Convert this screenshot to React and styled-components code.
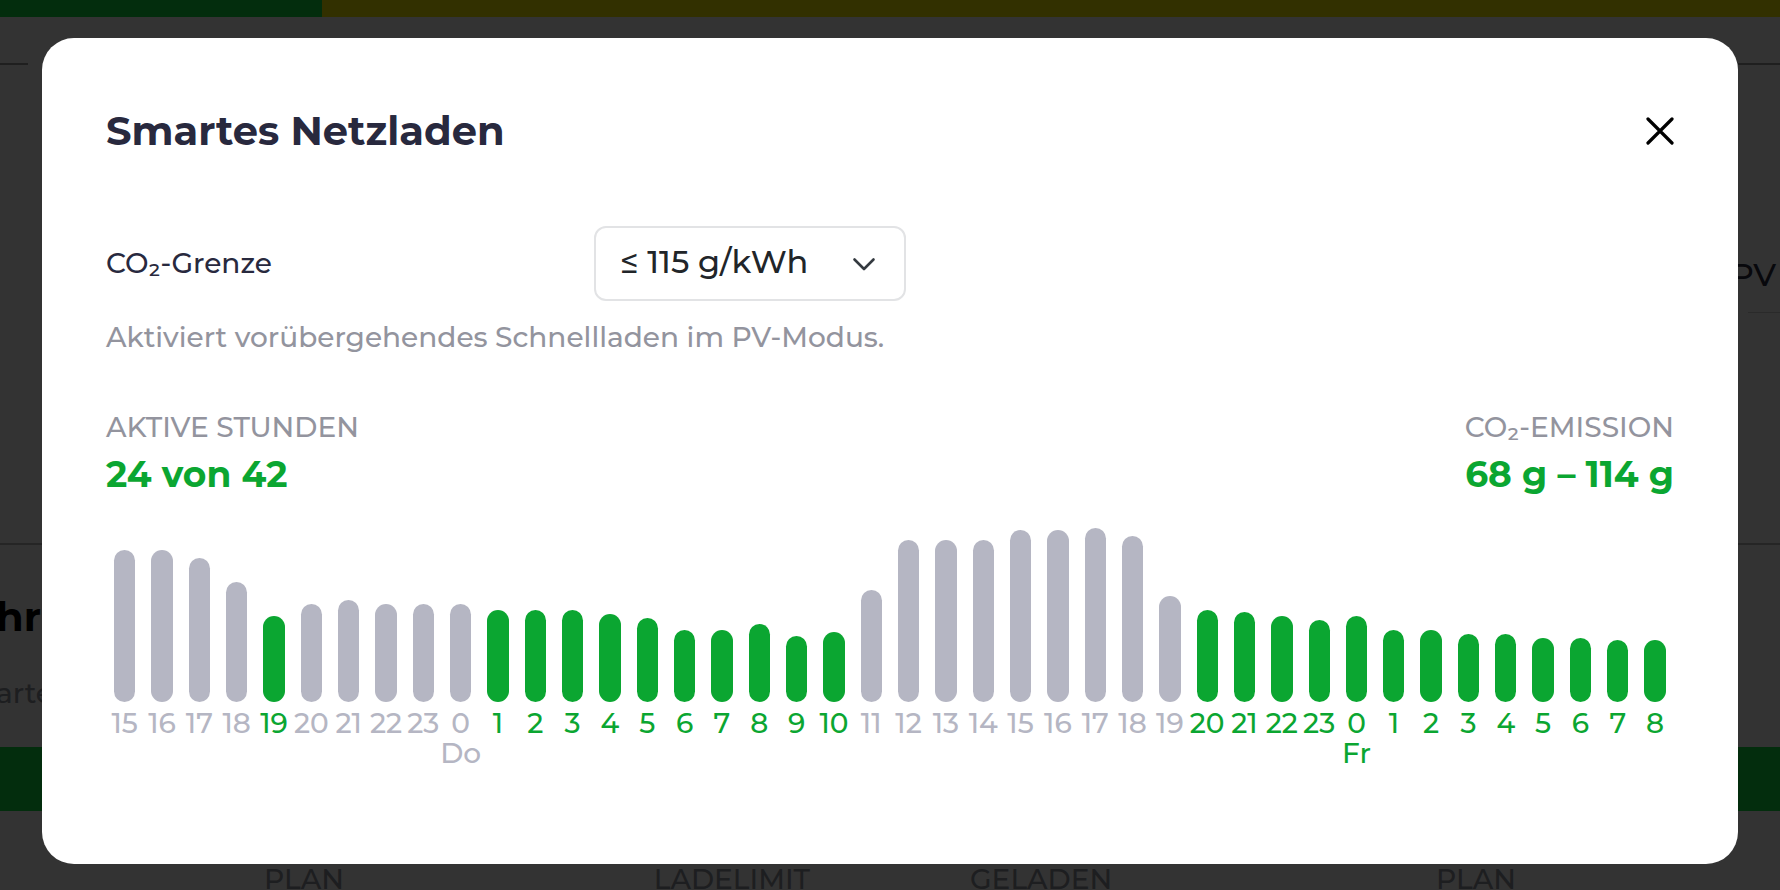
import React from "react";
import styled, { createGlobalStyle } from "styled-components";

const green = "#0ba631";
const greyBar = "#b5b6c3";
const muted = "#93949e";
const ink = "#28293e";

const GlobalStyle = createGlobalStyle`
  * { box-sizing: border-box; }
  html, body, #root { height: 100%; }
  body {
    margin: 0;
    overflow: hidden;
    background: #fff;
    color: ${ink};
    font-family: Montserrat, Inter, "Liberation Sans", sans-serif;
    font-size: 28px;
    font-weight: 500;
  }
`;

/* ---- page behind the dialog ---- */

const Page = styled.div`
  display: flex;
  flex-direction: column;
  height: 100vh;
  overflow: hidden;

  > * {
    flex-shrink: 0;
  }
`;

const EnergyBar = styled.div`
  display: grid;
  grid-template-columns: 322px 1fr;
  height: 17px;
`;

const EnergySegment = styled.div`
  background: ${(p) => (p.$self ? "#0fde41" : "#faf000")};
`;

const HeaderRules = styled.div`
  display: flex;
  justify-content: space-between;
  padding-top: 46px;
`;

const Rule = styled.div`
  width: ${(p) => p.$width}px;
  border-top: 2px solid #999;
`;

const ModeRow = styled.div`
  display: flex;
  justify-content: flex-end;
  align-items: center;
  height: 78px;
  margin-top: 170px;
  font-size: 32px;
  color: ${ink};

  &::after {
    content: "";
    align-self: flex-end;
    width: 32px;
    margin-left: -28px;
    border-bottom: 1px solid #d0d0d0;
  }
`;

const VehicleSection = styled.section`
  margin-top: 230px;
  border-top: 2px solid #bbb;
`;

const VehicleHead = styled.div`
  margin-left: -4px;
`;

const VehicleName = styled.h2`
  margin: 0;
  padding-top: 40px;
  font-size: 40px;
  font-weight: 700;
  line-height: 64px;
  color: #000;
`;

const VehicleState = styled.p`
  margin: 0;
  padding: 26px 0 36px;
  line-height: 36px;
  color: ${muted};
`;

const ChargeBar = styled.div`
  height: 64px;
  background: #0fde41;
`;

const Carousel = styled.div`
  display: flex;
  gap: 160px;
  margin-left: -202px;
  padding-top: 48px;
`;

const Card = styled.div`
  display: grid;
  grid-template-columns: 1fr auto 1fr;
  flex: 0 0 1012px;
  line-height: 40px;
  color: ${muted};
  text-transform: uppercase;
`;

const CardLabel = styled.span`
  grid-column: ${(p) => p.$column};
  text-align: ${(p) => (p.$column === 3 ? "right" : "left")};
`;

/* ---- dialog ---- */

const Backdrop = styled.div`
  position: fixed;
  inset: 0;
  padding: 38px 42px;
  background: rgba(0, 0, 0, 0.8);
`;

const Dialog = styled.section`
  padding: 64px 64px 96px;
  border-radius: 32px;
  background: #fff;
`;

const DialogHeader = styled.header`
  display: flex;
  align-items: center;
  justify-content: space-between;
  margin-bottom: 66px;
`;

const Title = styled.h1`
  margin: 0;
  font-size: 40px;
  font-weight: 700;
  line-height: 58px;
`;

const CloseButton = styled.button`
  display: flex;
  padding: 0;
  border: 0;
  background: none;
  color: #000;
  cursor: pointer;
`;

const FormRow = styled.div`
  display: grid;
  grid-template-columns: 488px 312px;
  align-items: center;
`;

const FormLabel = styled.label`
  padding-bottom: 2px;
`;

const SelectBox = styled.div`
  display: grid;
  align-items: center;

  > * {
    grid-area: 1 / 1;
  }

  svg {
    justify-self: end;
    margin-right: 30px;
    pointer-events: none;
  }
`;

const Select = styled.select`
  appearance: none;
  width: 100%;
  height: 75px;
  padding: 0 72px 4px 24px;
  border: 2px solid #e2e3e5;
  border-radius: 12px;
  background: #fff;
  color: #212529;
  font: inherit;
  font-size: 32px;
`;

const Help = styled.p`
  margin: 16px 0 50px;
  line-height: 40px;
  color: ${muted};
`;

const Summary = styled.div`
  display: flex;
  justify-content: space-between;
  margin-bottom: 24px;
`;

const Fact = styled.div`
  text-align: ${(p) => p.$align};
`;

const FactLabel = styled.div`
  line-height: 40px;
  color: ${muted};
  text-transform: uppercase;
`;

const FactValue = styled.div`
  font-size: 36px;
  font-weight: 700;
  line-height: 55px;
  color: ${green};
`;

const Chart = styled.div`
  display: flex;
`;

const Slot = styled.div`
  flex: 1 1 0;
  min-width: 0;
  color: ${(p) => (p.$active ? green : greyBar)};
`;

const BarTrack = styled.div`
  display: flex;
  align-items: flex-end;
  height: 176px;
  padding: 0 8px;
  margin-bottom: 6px;
`;

const Bar = styled.div`
  flex: 1;
  border-radius: 12px;
  background: currentColor;
`;

const SlotLabel = styled.div`
  display: flex;
  justify-content: center;
  height: 30px;
  line-height: 30px;
  white-space: nowrap;
`;

const heights = [
  152, 152, 144, 120, 86, 98, 102, 98, 98, 98, 92, 92, 92, 88, 84, 72, 72, 78,
  66, 70, 112, 162, 162, 162, 172, 172, 174, 166, 106, 92, 90, 86, 82, 86, 72,
  72, 68, 68, 64, 64, 62, 62,
];

const slots = heights.map((height, i) => ({
  hour: (15 + i) % 24,
  day: { 9: "Do", 33: "Fr" }[i],
  height,
  active: height <= 92,
}));

export default function App() {
  return (
    <>
      <GlobalStyle />
      <Page aria-hidden="true">
        <EnergyBar>
          <EnergySegment $self />
          <EnergySegment />
        </EnergyBar>
        <HeaderRules>
          <Rule $width={28} />
          <Rule $width={42} />
        </HeaderRules>
        <ModeRow>PV</ModeRow>
        <VehicleSection>
          <VehicleHead>
            <VehicleName>hr</VehicleName>
            <VehicleState>arte</VehicleState>
          </VehicleHead>
          <ChargeBar />
          <Carousel>
            <Card>
              <CardLabel $column={2}>Plan</CardLabel>
              <CardLabel $column={3}>Ladelimit</CardLabel>
            </Card>
            <Card>
              <CardLabel $column={1}>Geladen</CardLabel>
              <CardLabel $column={2}>Plan</CardLabel>
            </Card>
          </Carousel>
        </VehicleSection>
      </Page>

      <Backdrop>
        <Dialog role="dialog" aria-modal="true" aria-labelledby="dialog-title">
          <DialogHeader>
            <Title id="dialog-title">Smartes Netzladen</Title>
            <CloseButton type="button" aria-label="Schließen">
              <svg width="28" height="28" viewBox="0 0 28 28" fill="none" stroke="currentColor" strokeWidth="3.2" strokeLinecap="round">
                <path d="M2 2 26 26M26 2 2 26" />
              </svg>
            </CloseButton>
          </DialogHeader>

          <FormRow>
            <FormLabel htmlFor="co2-limit">CO₂-Grenze</FormLabel>
            <SelectBox>
              <Select id="co2-limit" defaultValue="115">
                <option value="115">≤ 115 g/kWh</option>
              </Select>
              <svg width="24" height="24" viewBox="0 0 24 24" fill="none" stroke="#343a40" strokeWidth="2.6" strokeLinecap="round" strokeLinejoin="round">
                <path d="m2.5 7.5 9.5 9.5 9.5-9.5" />
              </svg>
            </SelectBox>
          </FormRow>
          <Help>Aktiviert vorübergehendes Schnellladen im PV-Modus.</Help>

          <Summary>
            <Fact $align="left">
              <FactLabel>Aktive Stunden</FactLabel>
              <FactValue>24 von 42</FactValue>
            </Fact>
            <Fact $align="right">
              <FactLabel>CO₂-Emission</FactLabel>
              <FactValue>68 g – 114 g</FactValue>
            </Fact>
          </Summary>

          <Chart>
            {slots.map((slot, i) => (
              <Slot key={i} $active={slot.active}>
                <BarTrack>
                  <Bar style={{ height: slot.height }} />
                </BarTrack>
                <SlotLabel>{slot.hour}</SlotLabel>
                <SlotLabel>{slot.day}</SlotLabel>
              </Slot>
            ))}
          </Chart>
        </Dialog>
      </Backdrop>
    </>
  );
}
